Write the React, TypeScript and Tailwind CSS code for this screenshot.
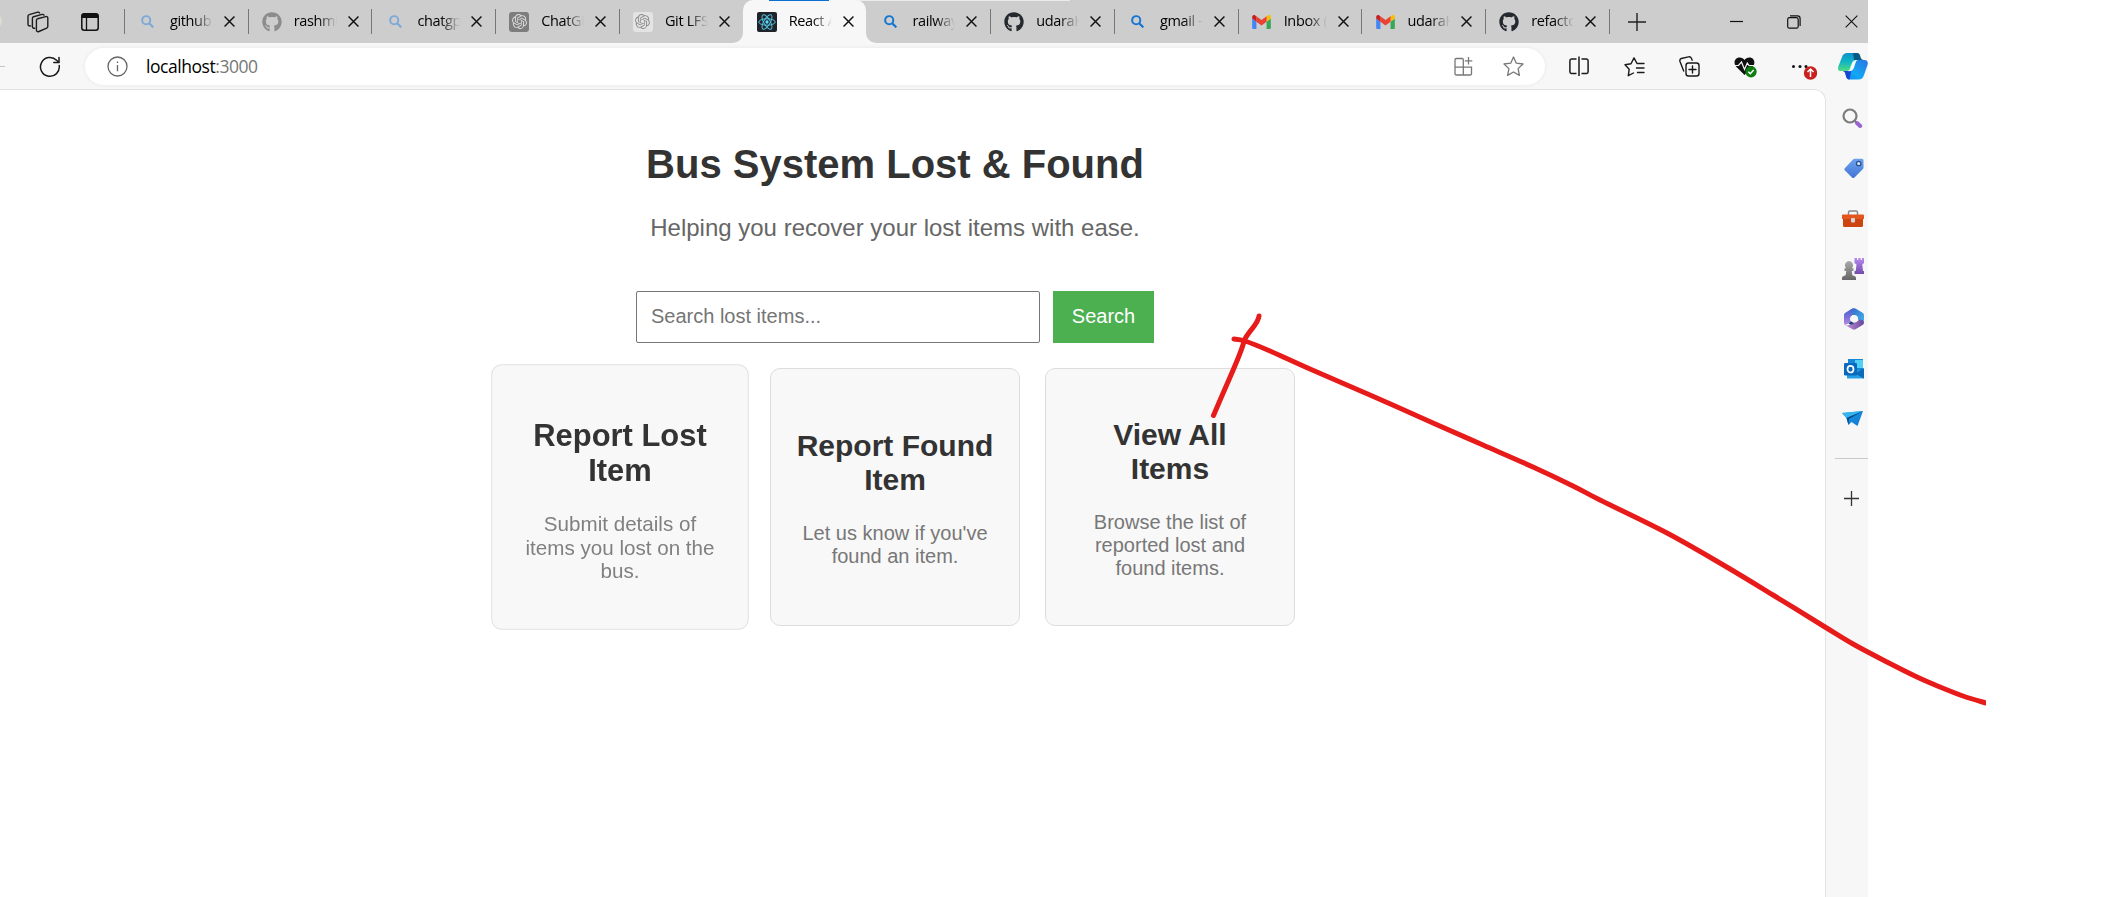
import React from "react";
import { FaGithub } from "react-icons/fa";
import { SiOpenai } from "react-icons/si";

type TabKind = "searchDim" | "githubDim" | "aiDark" | "aiLight" | "react" | "search" | "github" | "gmail";

interface Tab {
  kind: TabKind;
  title: string;
  active?: boolean;
}

const tabs: Tab[] = [
  { kind: "searchDim", title: "github" },
  { kind: "githubDim", title: "rashmi" },
  { kind: "searchDim", title: "chatgpt" },
  { kind: "aiDark", title: "ChatGPT" },
  { kind: "aiLight", title: "Git LFS" },
  { kind: "react", title: "React App", active: true },
  { kind: "search", title: "railway" },
  { kind: "github", title: "udaraK" },
  { kind: "search", title: "gmail - " },
  { kind: "gmail", title: "Inbox (" },
  { kind: "gmail", title: "udaraK" },
  { kind: "github", title: "refacto" },
];

function Magnifier({ color }: { color: string }) {
  return (
    <svg width="13" height="13" viewBox="0 0 14 14" fill="none" stroke={color} strokeWidth="2.1">
      <circle cx="5.6" cy="5.6" r="4.4" />
      <path d="M8.8 8.8L13.3 13.3" strokeWidth="2.4" />
    </svg>
  );
}

function Favicon({ kind }: { kind: TabKind }) {
  switch (kind) {
    case "searchDim":
      return <Magnifier color="#7fa9d6" />;
    case "search":
      return <Magnifier color="#1576d2" />;
    case "githubDim":
      return <FaGithub size={20} color="#8b8c8e" />;
    case "github":
      return <FaGithub size={20} color="#24292f" />;
    case "aiDark":
      return (
        <span className="flex h-5 w-5 items-center justify-center rounded-[3px] bg-[#7d7d7d]">
          <SiOpenai size={15} color="#dcdcdc" />
        </span>
      );
    case "aiLight":
      return (
        <span className="flex h-5 w-5 items-center justify-center rounded-[3px] bg-[#e4e4e4]">
          <SiOpenai size={15} color="#8d8d8d" />
        </span>
      );
    case "react":
      return (
        <span className="flex h-5 w-5 items-center justify-center rounded-[2px] bg-[#20232a]">
          <svg width="18" height="18" viewBox="-12 -12 24 24" fill="none" stroke="#53c1de" strokeWidth="1.3">
            <circle r="2.2" fill="#61dafb" stroke="none" />
            <ellipse rx="11" ry="4.3" />
            <ellipse rx="11" ry="4.3" transform="rotate(60)" />
            <ellipse rx="11" ry="4.3" transform="rotate(120)" />
          </svg>
        </span>
      );
    case "gmail":
      return (
        <svg width="19" height="14" viewBox="52 42 88 66">
          <path fill="#4285f4" d="M58 108h14V74L52 59v43c0 3.32 2.69 6 6 6" />
          <path fill="#34a853" d="M120 108h14c3.32 0 6-2.69 6-6V59l-20 15" />
          <path fill="#fbbc04" d="M120 48v26l20-15v-8c0-7.42-8.47-11.65-14.4-7.2" />
          <path fill="#ea4335" d="M72 74V48l24 18 24-18v26L96 92" />
          <path fill="#c5221f" d="M52 51v8l20 15V48l-5.6-4.2c-5.94-4.45-14.4-.22-14.4 7.2" />
        </svg>
      );
  }
}

function Cross({ size, width }: { size: number; width: number }) {
  return (
    <svg width={size} height={size} viewBox="0 0 12 12" stroke="#111" strokeWidth={width}>
      <path d="M0.6 0.6L11.4 11.4M11.4 0.6L0.6 11.4" />
    </svg>
  );
}

function TabItem({ tab, divider }: { tab: Tab; divider: boolean }) {
  return (
    <div
      className={
        tab.active
          ? "relative flex h-[43px] w-[123.75px] shrink-0 items-center rounded-t-[10px] bg-[#f7f7f7]"
          : "relative flex h-[43px] w-[123.75px] shrink-0 items-center"
      }
    >
      {divider && <span className="absolute left-0 top-[9px] h-[25px] w-px bg-[#777]" />}
      {tab.active && (
        <>
          <svg className="absolute -left-[10px] bottom-0" width="10" height="10">
            <path d="M10 0V10H0A10 10 0 0 0 10 0Z" fill="#f7f7f7" />
          </svg>
          <svg className="absolute -right-[10px] bottom-0" width="10" height="10">
            <path d="M0 0V10H10A10 10 0 0 1 0 0Z" fill="#f7f7f7" />
          </svg>
          <span className="absolute left-[26px] top-0 h-px w-[60px] bg-[#0a6fd0]" />
        </>
      )}
      <span className="ml-[14px] flex w-5 shrink-0 items-center justify-center">
        <Favicon kind={tab.kind} />
      </span>
      <span className="mb-[1px] ml-3 w-[43px] overflow-hidden whitespace-nowrap font-['Open_Sans','Noto_Sans',sans-serif] text-[14.5px] leading-5 tracking-[-0.35px] text-black [mask-image:linear-gradient(to_right,#000_55%,transparent_100%)]">
        {tab.title}
      </span>
      <span className="ml-[11px] flex">
        <Cross size={11} width={1.6} />
      </span>
    </div>
  );
}

function TabBar() {
  return (
    <div className="relative flex h-[43px] bg-[#cdcdcd]">
      <span className="absolute left-[829px] top-0 h-px w-[241px] bg-[#ebebeb]" />
      <span className="absolute -left-[12px] top-[14px] h-[14px] w-[14px] rounded-full bg-[#dcdcd0]" />
      <div className="flex w-[123.9px] shrink-0 items-center pl-[26.5px]">
        <svg width="22" height="22" viewBox="0 0 22 22" fill="none" stroke="#1c1c1c" strokeWidth="1.4" strokeLinejoin="round" strokeLinecap="round">
          <path d="M9.4 9.3c0-.8.4-1.3 1.1-1.5l8.4-2.2c1.100-.3 1.900.3 1.900 1.300v8.600c0 .8-.4 1.300-1.100 1.600l-7.800 3.400c-1.400.6-2.500-.1-2.500-1.400z" />
          <path d="M7.700 17.200c-1.500.2-2.300-.5-2.300-1.700V7.300c0-.8.4-1.400 1.200-1.600l8.500-2.300c.8-.2 1.500.1 1.900.8" />
          <path d="M3.700 14.900c-1.800.2-2.700-.5-2.700-1.700V5.200c0-.8.4-1.400 1.200-1.600l8.500-2.400c.8-.2 1.500.1 1.900.8" />
        </svg>
        <svg className="ml-[32.5px]" width="18" height="18" viewBox="0 0 18 18">
          <rect x="0.8" y="0.8" width="16.400" height="16.400" rx="2.500" fill="none" stroke="#111" strokeWidth="1.500" />
          <path d="M0.500 5V3A2.500 2.500 0 0 1 3 .5h12A2.500 2.500 0 0 1 17.500 3v2z" fill="#111" />
          <path d="M5.500 5v12" stroke="#111" strokeWidth="1.300" />
        </svg>
      </div>
      {tabs.map((tab, i) => (
        <TabItem key={i} tab={tab} divider={!tab.active && i !== 6} />
      ))}
      <div className="flex flex-1 items-center">
        <span className="h-[25px] w-px bg-[#777]" />
        <svg className="ml-[18px]" width="18" height="18" stroke="#222" strokeWidth="1.400">
          <path d="M0 9H18M9 0V18" />
        </svg>
        <svg className="ml-[84px]" width="13" height="13" stroke="#111" strokeWidth="1.200">
          <path d="M0 6.500H13" />
        </svg>
        <svg className="ml-[44px]" width="14" height="14" fill="none" stroke="#111" strokeWidth="1.200">
          <rect x="0.700" y="2.700" width="10.500" height="10.500" rx="1.800" />
          <path d="M3 .9h7.500a2.600 2.600 0 0 1 2.600 2.600V11" />
        </svg>
        <span className="ml-[44px]">
          <Cross size={13} width={1} />
        </span>
      </div>
    </div>
  );
}

const ICON_BOX = "relative flex w-[55.3px] shrink-0 items-center justify-center";

function Toolbar() {
  return (
    <div className="flex h-[46px] items-center bg-[#f7f7f7] pt-px">
      <span className="h-px w-[5px] bg-[#c4c4c4]" />
      <svg className="ml-[34px]" width="22" height="22" viewBox="0 0 22 22" fill="none" stroke="#1a1a1a" strokeWidth="1.500" strokeLinecap="round" strokeLinejoin="round">
        <path d="M20.200 9.500A9.400 9.400 0 1 1 17.600 4.300L19.800 6.300" />
        <path d="M20 1.500V6.600H14.800" />
      </svg>
      <div className="ml-[24px] flex h-[37px] w-[1460px] shrink-0 items-center rounded-full bg-white pl-[22px] shadow-[0_0_4px_rgba(0,0,0,0.07)]">
        <svg width="21" height="21" fill="none" stroke="#666" strokeWidth="1.300">
          <circle cx="10.500" cy="10.500" r="9.500" />
          <path d="M10.500 9v6.300M10.500 5.400v1.600" />
        </svg>
        <span className="ml-[18px] font-['Open_Sans','Noto_Sans',sans-serif] text-[17.5px] tracking-[-0.45px] text-black">
          localhost<span className="text-[#777]">:3000</span>
        </span>
        <svg className="ml-auto" width="19" height="19" fill="none" stroke="#777" strokeWidth="1.300">
          <path d="M8.800 1.500H2.200A1.200 1.200 0 0 0 1 2.700V16.800A1.200 1.200 0 0 0 2.200 18H16.300A1.200 1.200 0 0 0 17.500 16.800V10.200H1M9.300 1.500V18M14.500 0V7.500M10.800 3.800H18.300" />
        </svg>
        <svg className="ml-[30px] mr-[21px]" width="21" height="21" viewBox="0 0 21 21" fill="none" stroke="#777" strokeWidth="1.300" strokeLinejoin="round">
          <path d="M10.500 1L13.300 7.200L20 8L15.100 12.600L16.400 19.400L10.500 16L4.600 19.400L5.900 12.600L1 8L7.700 7.200Z" />
        </svg>
      </div>
      <div className="ml-[6.5px] flex">
        <div className={ICON_BOX}>
          <svg width="20" height="21" fill="none" stroke="#1a1a1a" strokeWidth="1.500">
            <path d="M7.500 3H2.500A1.700 1.700 0 0 0 .9 4.700V15.800A1.700 1.700 0 0 0 2.500 17.500H7.500M12.500 3H17.500A1.700 1.700 0 0 1 19.100 4.700V15.800A1.700 1.700 0 0 1 17.500 17.500H12.500M10 .5V20" />
          </svg>
        </div>
        <div className={ICON_BOX}>
          <svg width="21" height="20" fill="none" stroke="#1a1a1a" strokeWidth="1.400" strokeLinejoin="round" strokeLinecap="round">
            <path d="M13 6.500L10 .9L7 6.700L1 7.700L5.200 12.200L4.300 18.700L9.500 16M13.500 6.500H20M12.500 11H20M13.500 15.500H20" />
          </svg>
        </div>
        <div className={ICON_BOX}>
          <svg width="21" height="21" fill="none" stroke="#1a1a1a" strokeWidth="1.400" strokeLinecap="round">
            <rect x="7" y="7" width="13" height="13" rx="2.500" />
            <path d="M13.500 10V17M10 13.500H17M4.700 15L1 5.500C.6 4.200 1.100 3 2.300 2.500L9.500 .9C11 .6 12 1.300 12.500 2.500L13.200 4.200" />
          </svg>
        </div>
        <div className={ICON_BOX}>
          <svg width="23" height="22" viewBox="0 0 23 22">
            <path d="M10.500 19L2.200 10.700C-1.300 6.500 1.200 1.500 5.500 1.500C8 1.500 9.500 2.500 10.500 4C11.500 2.500 13 1.500 15.500 1.500C20 1.500 22 6.500 18.800 10.700Z" fill="#111" />
            <path d="M0 9.500H4.500L7.500 6L10.500 13.500L13.300 7L15 9.500H21" fill="none" stroke="#f7f7f7" strokeWidth="1.200" />
            <circle cx="17" cy="15.700" r="5.700" fill="#0f7b10" />
            <path d="M14.300 15.800L16.300 17.700L19.700 14" fill="none" stroke="#fff" strokeWidth="1.500" />
          </svg>
        </div>
        <div className={ICON_BOX}>
          <svg className="ml-[6px]" width="27" height="26" viewBox="0 0 27 26">
            <circle cx="3.500" cy="12.500" r="1.500" fill="#111" />
            <circle cx="10" cy="12.500" r="1.500" fill="#111" />
            <circle cx="16" cy="12.500" r="1.500" fill="#111" />
            <circle cx="20.500" cy="19" r="6.700" fill="#c92020" />
            <path d="M20.500 23V15.500M17.500 18L20.500 15L23.500 18" fill="none" stroke="#fff" strokeWidth="1.500" />
          </svg>
        </div>
      </div>
      <svg className="ml-auto shrink-0" width="30" height="27" viewBox="0 0 30 27">
        <defs>
          <linearGradient id="cpA" x1="0" y1="0" x2="0" y2="1">
            <stop offset="0" stopColor="#0d91cf" />
            <stop offset="0.500" stopColor="#12b5c4" />
            <stop offset="1" stopColor="#4fdc7c" />
          </linearGradient>
          <linearGradient id="cpB" x1="1" y1="0" x2="0" y2="1">
            <stop offset="0" stopColor="#2b74e2" />
            <stop offset="0.600" stopColor="#12a8f5" />
            <stop offset="1" stopColor="#1583e8" />
          </linearGradient>
        </defs>
        <path d="M9 0H20L18 8L14 14C13 17 12 18 9.500 18H3C0 18-.5 16 .5 13L4 4C5 1 7 0 9 0Z" fill="url(#cpA)" />
        <path d="M15 0H19C21.500 0 22 2 22.500 4C23 6 24 7 26 7H16Z" fill="#0a5a86" />
        <path d="M20 7H26.500C29 7 30.500 9 29.500 12L26 22C25 25 23.500 26.500 20.500 26.500H11C8 26.500 8 22 7 19.500C6.700 18.500 6 18 5 18H10C13.500 18 14.500 17 15.500 14L17 10C17.700 8 18 7 20 7Z" fill="url(#cpB)" />
        <path d="M5 18H10C11.500 18 12.500 18 13.500 17L11.500 26.500C8 26.500 8 22 7 19.500Z" fill="#1947d2" />
        <path d="M20 7C16.500 6.700 15 7.500 14 10L12.500 14C11.800 16.500 11 18 9 18C12.500 18.500 15 18 16 14.500L17.500 10C18 8 18.500 7.300 20 7Z" fill="#f5ffff" />
      </svg>
    </div>
  );
}

function SidebarIcons() {
  const box = "flex h-[50.2px] items-center justify-center";
  return (
    <aside className="flex w-[42px] shrink-0 flex-col bg-[#f7f7f7] pl-[11px] pt-[4px]">
      <svg width="0" height="0" className="absolute">
        <defs>
          <linearGradient id="blueTag" x1="0" y1="0" x2="0" y2="1">
            <stop offset="0" stopColor="#6ba3ee" />
            <stop offset="1" stopColor="#4474d6" />
          </linearGradient>
          <linearGradient id="grayPawn" x1="0" y1="0" x2="0" y2="1">
            <stop offset="0" stopColor="#aaa" />
            <stop offset="1" stopColor="#666" />
          </linearGradient>
          <linearGradient id="rook" x1="0" y1="0" x2="0" y2="1">
            <stop offset="0" stopColor="#b78af0" />
            <stop offset="1" stopColor="#744bad" />
          </linearGradient>
          <linearGradient id="plane" x1="0" y1="0" x2="1" y2="1">
            <stop offset="0" stopColor="#1b9be5" />
            <stop offset="1" stopColor="#1077cf" />
          </linearGradient>
          <linearGradient id="hexLeft" x1="0" y1="0" x2="0" y2="1">
            <stop offset="0" stopColor="#3c68cf" />
            <stop offset="0.500" stopColor="#7d6fd8" />
            <stop offset="1" stopColor="#b48ae0" />
          </linearGradient>
          <linearGradient id="hexRight" x1="0" y1="0" x2="1" y2="1">
            <stop offset="0" stopColor="#2f63c6" />
            <stop offset="1" stopColor="#45b6ee" />
          </linearGradient>
          <linearGradient id="hexBottom" x1="0" y1="0" x2="1" y2="0">
            <stop offset="0" stopColor="#c596e0" />
            <stop offset="1" stopColor="#6b4497" />
          </linearGradient>
        </defs>
      </svg>
      <div className={box}>
        <svg width="21" height="21" fill="none">
          <circle cx="8" cy="8" r="6.500" stroke="#7c7c7c" strokeWidth="2.200" />
          <path d="M12.500 12.500L14.500 14.500" stroke="#777" strokeWidth="2" />
          <path d="M15 15L18.200 18" stroke="#9963d0" strokeWidth="4" strokeLinecap="round" />
        </svg>
      </div>
      <div className={box}>
        <svg className="ml-[2px]" width="20" height="21">
          <path d="M10.500 .8H18Q19.500 .8 19.500 2.300V9.500Q19.500 10.500 18.700 11.300L10.500 19.400Q9.300 20.500 8 19.400L1 12.500Q-.2 11.200 1 10L9 1.500Q9.600 .8 10.500 .8Z" fill="url(#blueTag)" />
          <circle cx="14.700" cy="5.500" r="2.200" fill="#dbe9fb" stroke="#27508c" strokeWidth="1.300" />
        </svg>
      </div>
      <div className={box}>
        <svg className="ml-[1px] mt-[2px]" width="22" height="18">
          <path d="M6.500 5V2.500Q6.500 1 8 1H14Q15.500 1 15.500 2.500V5" fill="none" stroke="#888" strokeWidth="1.500" />
          <path d="M0 5Q0 4.500 1 4.500H21Q22 4.500 22 5.500V9H0Z" fill="#e4561d" />
          <path d="M1 9H21V15.500Q21 17 19.500 17H2.500Q1 17 1 15.500Z" fill="#cc440f" />
          <rect x="9" y="8" width="4" height="4.500" rx="1" fill="#d5d5d5" />
        </svg>
      </div>
      <div className={box}>
        <svg className="ml-[1px] mt-[1px]" width="22" height="23">
          <path d="M12.500 0H15V2H16.300V0H18.700V2H20V0H22V5L20.300 6.500L21 13H22V16H12.500V13H13.700L14.500 6.500L12.500 5Z" fill="url(#rook)" />
          <path d="M7 3A4.300 4.300 0 0 1 10 10.200H11.500V13H9.700L10.500 17.500Q14 18 14 20V22H0V20Q0 18 3.500 17.500L4.300 13H2.500V10.200H4A4.300 4.300 0 0 1 7 3Z" fill="url(#grayPawn)" />
        </svg>
      </div>
      <div className={box}>
        <svg className="ml-[2px]" width="20" height="22">
          <path d="M8.500 .6Q10 -.2 11.500 .6L18.500 4.700Q20 5.500 20 7.200V14.500L13.800 11.500A4 4 0 0 0 7 8.300L5.500 2.300Z" fill="url(#hexRight)" />
          <path d="M8.500 .6L11.500 1.500Q8 3.500 8 7.500A4 4 0 0 0 7.500 14L1 17Q0 16.300 0 14.500V7Q0 5.500 1.300 4.700Z" fill="url(#hexLeft)" />
          <path d="M1 17Q5 18.500 9 15L13.500 13Q18 9.500 20 14.500Q20 16.200 18.500 17L11.500 21.300Q10 22 8.500 21.300Z" fill="url(#hexBottom)" />
          <path d="M4.500 15.500L7.500 13Q8.500 14.500 10.500 15Q7 18 4.500 15.500Z" fill="#27447f" />
          <circle cx="10.300" cy="10.800" r="3.700" fill="#f7f7f7" />
        </svg>
      </div>
      <div className={box}>
        <svg className="ml-[2px]" width="20" height="20">
          <path d="M4 0H19V13H4Z" fill="#1688d8" />
          <path d="M11 1H19V9H11Z" fill="#50d0f5" />
          <path d="M3 11H20V19.500H3Z" fill="#249ee5" />
          <path d="M20 9L11 14.500L20 19.500Z" fill="#0c6bb8" />
          <rect x="0" y="4" width="13" height="12.500" rx="1.200" fill="#0969bd" />
          <ellipse cx="6.500" cy="10.200" rx="3" ry="3.300" fill="none" stroke="#fff" strokeWidth="1.700" />
        </svg>
      </div>
      <div className={box}>
        <svg width="21" height="16">
          <path d="M0 2L21 0L15.500 15L9.500 11L6.500 14L4.500 7Z" fill="url(#plane)" />
          <path d="M0 2L21 0L4.500 7Z" fill="#36b4ec" />
          <path d="M21 0L7 8L6.500 14L4.500 7Z" fill="#064b8e" />
        </svg>
      </div>
      <div className="-ml-[2px] mt-[14px] h-px w-[33px] bg-[#c9c9c9]" />
      <div className="flex h-[79px] items-center justify-center pr-[2px]">
        <svg width="15" height="15" stroke="#333" strokeWidth="1.300">
          <path d="M0 7.500H15M7.500 0V15" />
        </svg>
      </div>
    </aside>
  );
}

interface CardProps {
  title: [string, string];
  lines: string[];
  hovered?: boolean;
}

function Card({ title, lines, hovered }: CardProps) {
  return (
    <div
      className={
        hovered
          ? "flex h-[258px] w-[250px] scale-[1.03] flex-col items-center justify-center rounded-[10px] border border-[#e2e2e2] bg-[#f8f8f8] pt-[7px] text-center"
          : "flex h-[258px] w-[250px] flex-col items-center justify-center rounded-[10px] border border-[#ddd] bg-[#f8f8f8] pt-[3px] text-center"
      }
    >
      <h2 className="text-[30px] font-bold leading-[34px] text-[#333]">
        {title[0]}
        <br />
        {title[1]}
      </h2>
      <p className={hovered ? "mt-[24.5px] text-[20px] leading-[23px] text-[#808080]" : "mt-[25px] text-[20px] leading-[23px] text-[#777]"}>
        {lines.map((line, i) => (
          <React.Fragment key={i}>
            {i > 0 && <br />}
            {line}
          </React.Fragment>
        ))}
      </p>
    </div>
  );
}

function Page() {
  return (
    <main className="flex-1 rounded-tr-[12px] border-r border-t border-[#e3e3e3] bg-white font-['Liberation_Sans',Arial,sans-serif]">
      <div className="flex w-[1790px] flex-col items-center">
        <h1 className="mt-[51px] text-[40px] font-bold leading-[46px] text-[#333]">Bus System Lost &amp; Found</h1>
        <p className="mt-[27px] text-[24px] leading-[27px] text-[#666]">Helping you recover your lost items with ease.</p>
        <form className="mt-[50px] flex gap-[13px]" onSubmit={(e) => e.preventDefault()}>
          <input
            type="text"
            placeholder="Search lost items..."
            className="h-[52px] w-[404px] rounded-[2px] border border-[#767676] bg-white px-[14px] pb-[2px] text-[20px] text-black placeholder:text-[#757575]"
          />
          <button className="h-[52px] w-[101px] bg-[#4caf50] pb-[2px] text-[20px] text-white">Search</button>
        </form>
        <section className="mt-[25px] flex gap-[25px]">
          <Card title={["Report Lost", "Item"]} lines={["Submit details of", "items you lost on the", "bus."]} hovered />
          <Card title={["Report Found", "Item"]} lines={["Let us know if you've", "found an item."]} />
          <Card title={["View All", "Items"]} lines={["Browse the list of", "reported lost and", "found items."]} />
        </section>
      </div>
    </main>
  );
}

type Point = [number, number];

const longStroke: Point[] = [
  [1234, 339],
  [1245, 341],
  [1270, 351],
  [1310, 369],
  [1370, 395],
  [1433, 423],
  [1483, 445],
  [1533, 467],
  [1573, 486],
  [1600, 500],
  [1667, 533],
  [1725, 566],
  [1773, 595],
  [1825, 627],
  [1853, 644],
  [1887, 662],
  [1917, 677],
  [1940, 687],
  [1963, 696],
  [1986, 703],
  [2004, 708],
];

function smoothPath(points: Point[]): string {
  let d = `M${points[0][0]} ${points[0][1]}`;
  for (let i = 0; i < points.length - 1; i++) {
    const p0 = points[Math.max(i - 1, 0)];
    const p1 = points[i];
    const p2 = points[i + 1];
    const p3 = points[Math.min(i + 2, points.length - 1)];
    d += `C${p1[0] + (p2[0] - p0[0]) / 6} ${p1[1] + (p2[1] - p0[1]) / 6} ${p2[0] - (p3[0] - p1[0]) / 6} ${p2[1] - (p3[1] - p1[1]) / 6} ${p2[0]} ${p2[1]}`;
  }
  return d;
}

function Annotation() {
  return (
    <svg
      className="pointer-events-none absolute left-0 top-0"
      width="1986"
      height="897"
      fill="none"
      stroke="#e81b1b"
      strokeWidth="5"
      strokeLinecap="round"
      strokeLinejoin="round"
    >
      <path d="M1259 316C1258 325 1248 331 1244 341C1242 352 1234 367 1213.500 415.500" />
      <path d={smoothPath(longStroke)} />
    </svg>
  );
}

export default function App() {
  return (
    <div className="relative h-[897px] w-[2104px] overflow-hidden bg-white">
      <div className="flex h-full w-[1868px] flex-col bg-[#f7f7f7]">
        <TabBar />
        <Toolbar />
        <div className="flex flex-1">
          <Page />
          <SidebarIcons />
        </div>
      </div>
      <Annotation />
    </div>
  );
}
